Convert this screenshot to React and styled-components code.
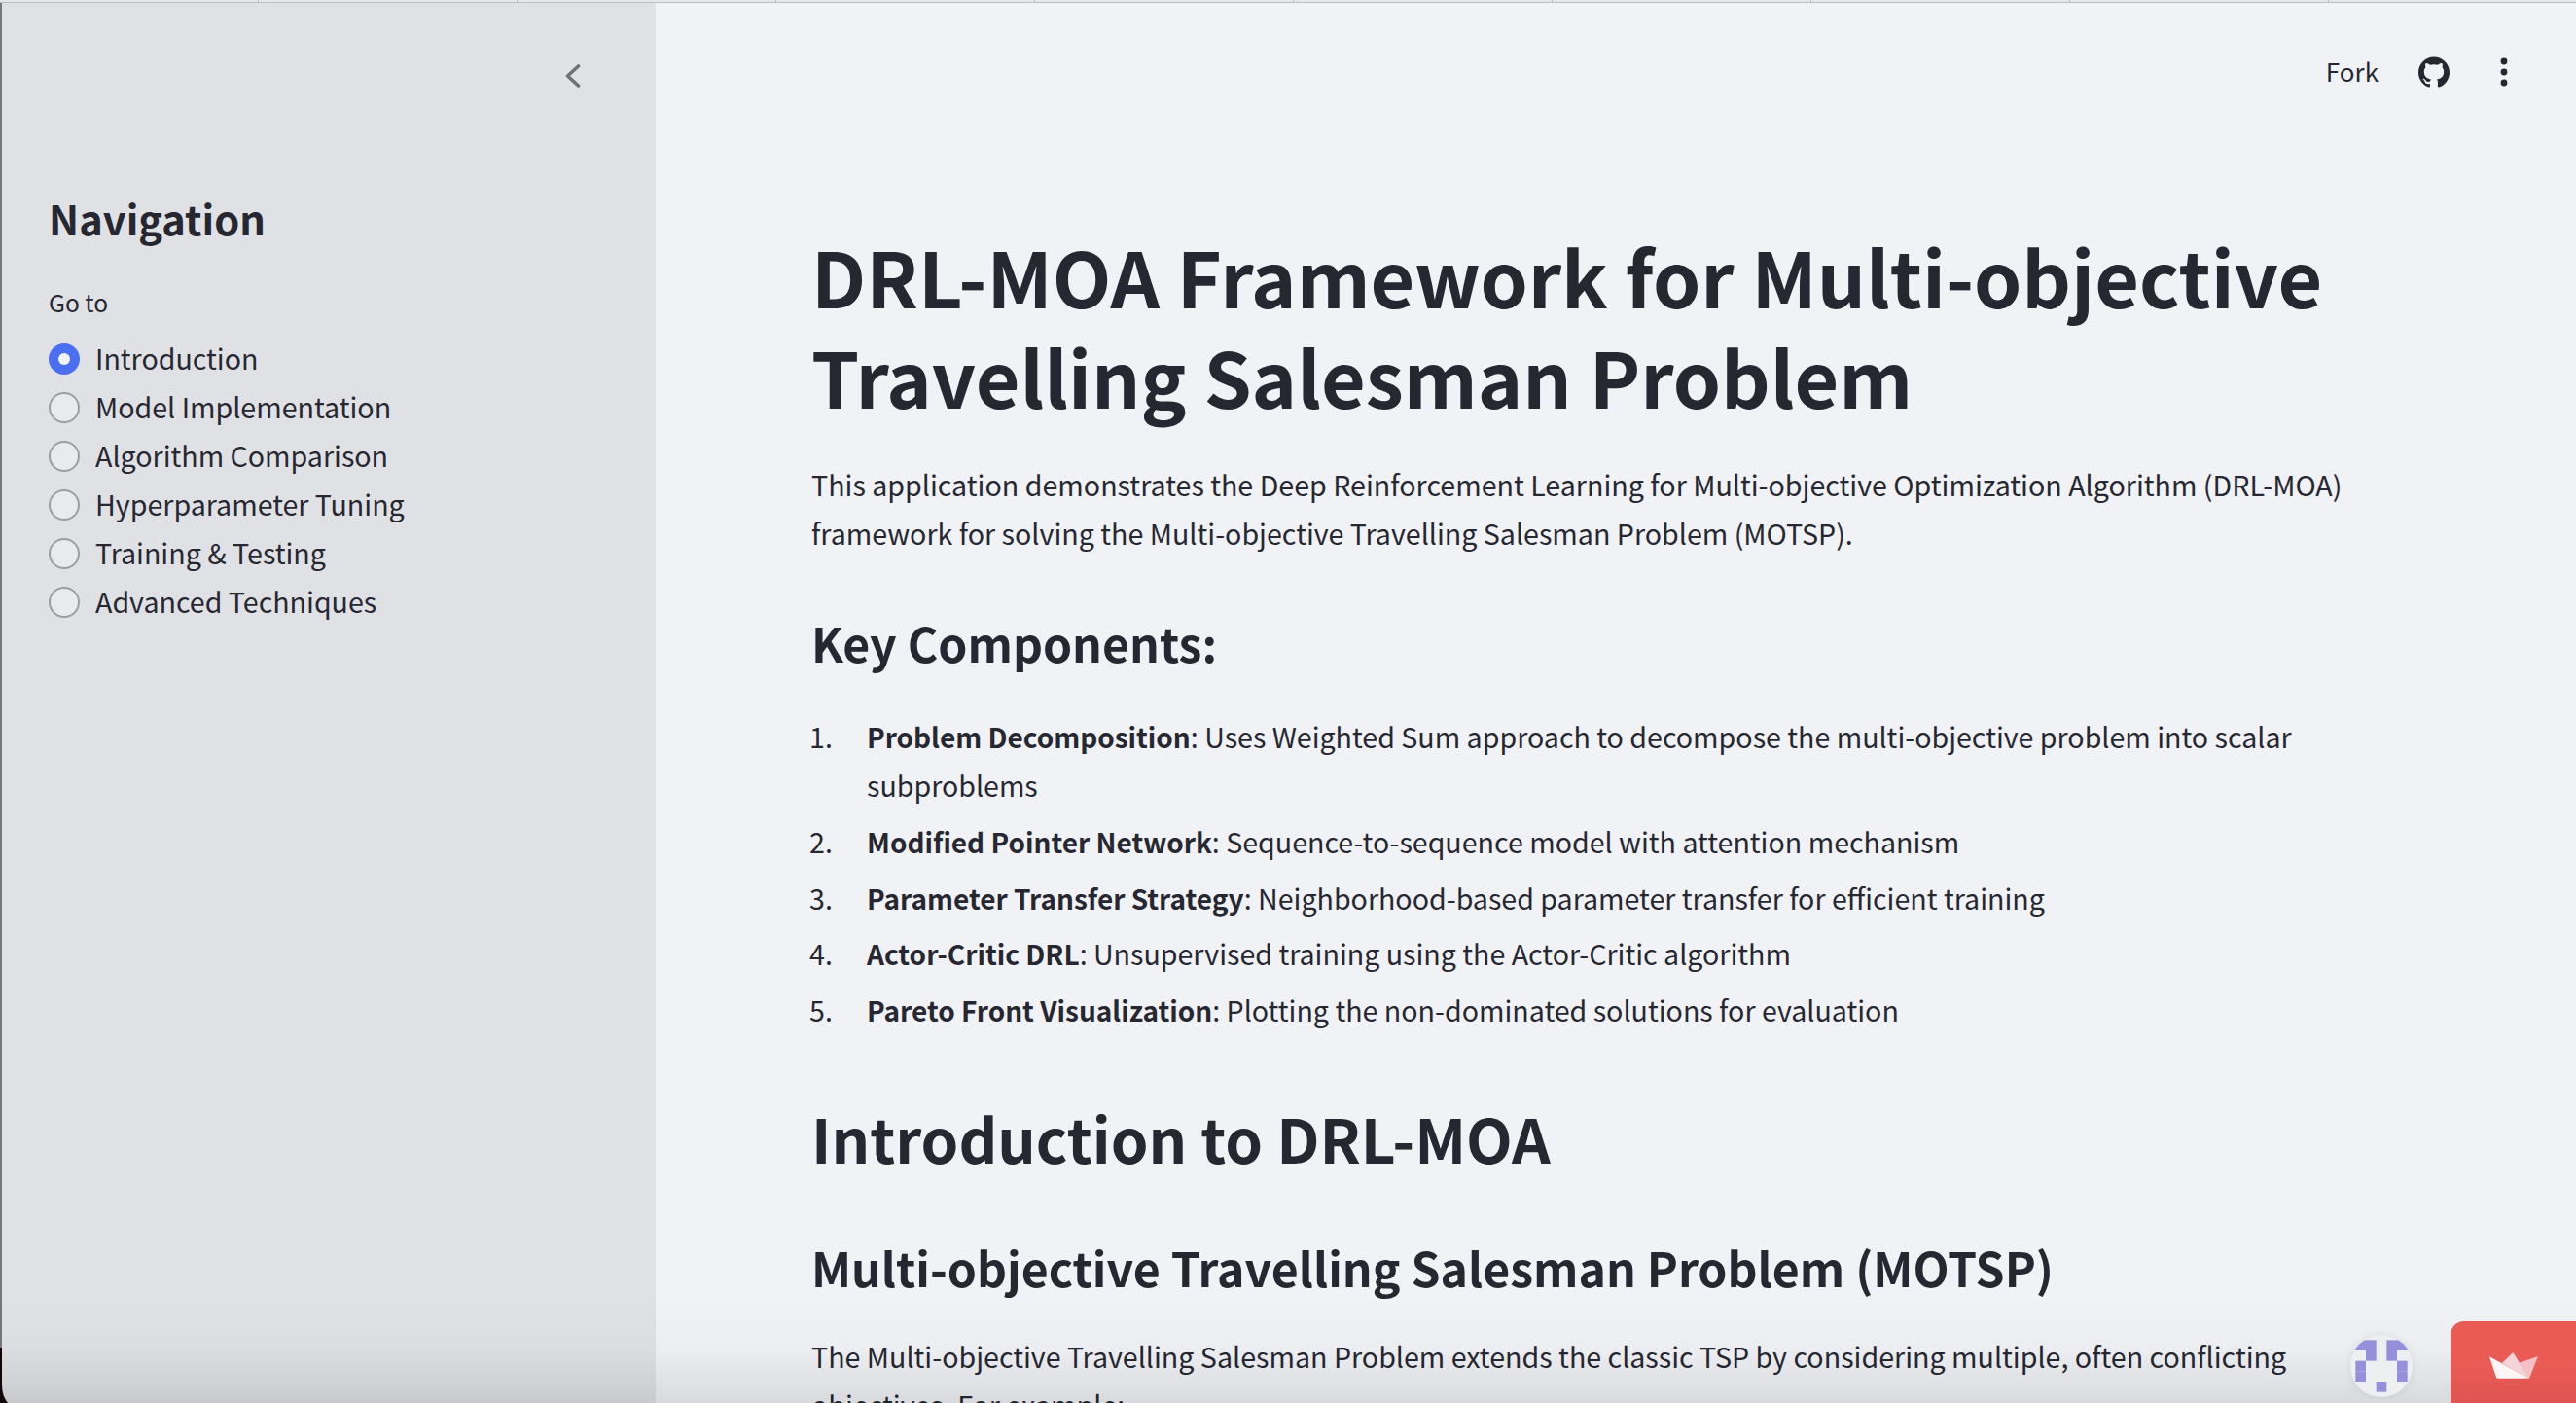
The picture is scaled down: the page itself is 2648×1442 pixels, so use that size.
import styled, { createGlobalStyle } from 'styled-components';
import { SiGithub } from 'react-icons/si';

const GlobalStyle = createGlobalStyle`
  html, body {
    margin: 0;
    padding: 0;
    background: #f0f2f6;
  }
  * {
    box-sizing: border-box;
  }
`;

const FONT = '"Noto Sans CJK SC", "Noto Sans", sans-serif';

const Page = styled.div`
  position: relative;
  display: flex;
  width: 2648px;
  height: 1442px;
  overflow: hidden;
  font-family: ${FONT};
  color: #262730;
  background: #f0f2f6;
`;

const TabStrip = styled.div`
  position: absolute;
  top: 0;
  left: 0;
  right: 0;
  height: 3px;
  display: flex;
  background: #e6e6e9;
  border-bottom: 1px solid #bdbec1;
  z-index: 3;
`;

const TabCell = styled.div`
  flex: 0 0 266px;
  border-right: 1px solid #bdbec1;
`;

const Sidebar = styled.aside`
  flex: 0 0 674px;
  height: 100%;
  padding: 66px 0 0 48px;
  background: #e0e1e5;
  border-left: 2px solid #777;
`;

const CollapseRow = styled.div`
  display: flex;
  justify-content: flex-end;
  padding-right: 77px;
  height: 135px;
  color: #707277;
`;

const NavTitle = styled.h2`
  margin: 0 0 45px;
  font-size: 41.6px;
  line-height: 46px;
  font-weight: 600;
  color: #262730;
`;

const GoToLabel = styled.div`
  font-size: 24.6px;
  line-height: 36px;
  margin-bottom: 16px;
`;

const RadioList = styled.div`
  display: flex;
  flex-direction: column;
`;

const RadioRow = styled.div`
  display: flex;
  align-items: center;
  gap: 16px;
  height: 50px;
  font-size: 28.6px;
`;

const RadioLabel = styled.span`
  padding-bottom: 4px;
`;

const RadioDot = styled.span`
  flex: 0 0 32px;
  height: 32px;
  border-radius: 50%;
  display: flex;
  align-items: center;
  justify-content: center;
  background: ${(p) => (p.$on ? '#4a6ff0' : '#e9eaee')};
  border: ${(p) => (p.$on ? 'none' : '2px solid #9c9da0')};
  &::after {
    content: '';
    display: ${(p) => (p.$on ? 'block' : 'none')};
    width: 12px;
    height: 12px;
    border-radius: 50%;
    background: #f0f2f6;
  }
`;

const Main = styled.main`
  flex: 1;
  min-width: 0;
  padding: 0 0 0 160px;
`;

const TopBar = styled.div`
  height: 148px;
  display: flex;
  align-items: center;
  justify-content: flex-end;
  margin-right: 69px;
  gap: 41px;
`;

const ForkLabel = styled.span`
  font-size: 26px;
  padding-bottom: 3px;
`;

const MenuDots = styled.svg`
  margin-left: 10px;
`;

const Content = styled.article`
  width: 1600px;
  margin-top: 84px;
`;

const Title = styled.h1`
  margin: 0 0 35px;
  font-size: 78.8px;
  line-height: 103px;
  font-weight: 700;
`;

const Paragraph = styled.p`
  margin: 0 0 52px;
  font-size: 28.64px;
  line-height: 50px;
`;

const SectionSub = styled.h3`
  margin: 0 0 32px;
  font-size: 48.2px;
  line-height: 70px;
  font-weight: 600;
`;

const Steps = styled.ol`
  list-style: none;
  margin: 37px 0 64px;
  padding: 0;
  font-size: 28.6px;
  line-height: 50px;
`;

const Step = styled.li`
  display: flex;
  margin-bottom: 7.8px;
  strong {
    font-size: 28px;
    font-weight: 600;
  }
`;

const StepNumber = styled.span`
  flex: 0 0 59px;
  margin-left: -2px;
`;

const SectionMain = styled.h2`
  margin: 0 0 56px;
  font-size: 62px;
  line-height: 84px;
  font-weight: 600;
`;

const BottomShade = styled.div`
  position: absolute;
  left: 0;
  right: 0;
  bottom: 0;
  height: 110px;
  background: linear-gradient(
    to bottom,
    rgba(0, 0, 0, 0),
    rgba(0, 0, 0, 0.02) 50%,
    rgba(0, 0, 0, 0.1)
  );
  pointer-events: none;
  z-index: 2;
`;

const WindowCorner = styled.svg`
  position: absolute;
  left: 0;
  bottom: 0;
  z-index: 3;
`;

const AvatarBadge = styled.div`
  position: absolute;
  left: 2416px;
  top: 1372px;
  width: 64px;
  height: 64px;
  border-radius: 50%;
  overflow: hidden;
  background: #eeeff1;
  box-shadow: 0 0 8px rgba(0, 0, 0, 0.08);
  z-index: 3;
`;

const HostBadge = styled.div`
  position: absolute;
  left: 2519px;
  right: 0;
  top: 1358px;
  bottom: 0;
  background: linear-gradient(to bottom, #ea5b56 50%, #df5551);
  border-top-left-radius: 14px;
  display: flex;
  justify-content: center;
  padding: 32px 0 0 0;
  z-index: 3;
`;

const NAV_ITEMS = [
  'Introduction',
  'Model Implementation',
  'Algorithm Comparison',
  'Hyperparameter Tuning',
  'Training & Testing',
  'Advanced Techniques',
];

const STEPS = [
  ['Problem Decomposition', 'Uses Weighted Sum approach to decompose the multi-objective problem into scalar subproblems'],
  ['Modified Pointer Network', 'Sequence-to-sequence model with attention mechanism'],
  ['Parameter Transfer Strategy', 'Neighborhood-based parameter transfer for efficient training'],
  ['Actor-Critic DRL', 'Unsupervised training using the Actor-Critic algorithm'],
  ['Pareto Front Visualization', 'Plotting the non-dominated solutions for evaluation'],
];

// [col, row] of the filled cells in the 5x5 identicon
const AVATAR_CELLS = [
  [0, 0], [1, 0], [3, 0], [4, 0],
  [1, 1], [3, 1],
  [0, 2], [4, 2],
  [0, 3], [4, 3],
  [2, 4],
];

function ChevronIcon() {
  return (
    <svg width="16" height="24" viewBox="0 0 16 24" fill="none">
      <path d="M13.5 2 L2.5 12 L13.5 22" stroke="currentColor" strokeWidth="3.6" strokeLinecap="round" strokeLinejoin="round" />
    </svg>
  );
}

function DotsIcon() {
  return (
    <MenuDots width="10" height="32" viewBox="0 0 10 32" fill="#262730">
      <circle cx="5" cy="5" r="3.4" />
      <circle cx="5" cy="16" r="3.4" />
      <circle cx="5" cy="27" r="3.4" />
    </MenuDots>
  );
}

function PixelAvatar() {
  return (
    <svg width="64" height="64" viewBox="0 0 64 64" fill="#9490dc">
      {AVATAR_CELLS.map(([col, row]) => (
        <rect key={`${col}-${row}`} x={5.33 + col * 10.67} y={5.33 + row * 10.67} width="10.67" height="10.67" />
      ))}
    </svg>
  );
}

function CrownIcon() {
  return (
    <svg width="50" height="27" viewBox="0 0 50 27">
      <path d="M24.3 0 L13 11 L41 26.7 Z" fill="#f6d5d8" />
      <path d="M50 4 L30 11 L41 26.7 Z" fill="#f4c1c6" />
      <path d="M0 4.3 L41 26.7 L9 26.7 Q7.5 26.7 7 25.5 Z" fill="#fdf6f6" />
    </svg>
  );
}

export default function App() {
  return (
    <Page>
      <GlobalStyle />
      <TabStrip>
        {Array.from({ length: 10 }, (_, i) => (
          <TabCell key={i} />
        ))}
      </TabStrip>
      <Sidebar>
        <CollapseRow>
          <ChevronIcon />
        </CollapseRow>
        <NavTitle>Navigation</NavTitle>
        <GoToLabel>Go to</GoToLabel>
        <RadioList>
          {NAV_ITEMS.map((item, i) => (
            <RadioRow key={item}>
              <RadioDot $on={i === 0} />
              <RadioLabel>{item}</RadioLabel>
            </RadioRow>
          ))}
        </RadioList>
      </Sidebar>
      <Main>
        <TopBar>
          <ForkLabel>Fork</ForkLabel>
          <SiGithub size={32} color="#262730" />
          <DotsIcon />
        </TopBar>
        <Content>
          <Title>DRL-MOA Framework for Multi-objective Travelling Salesman Problem</Title>
          <Paragraph>
            This application demonstrates the Deep Reinforcement Learning for Multi-objective Optimization Algorithm (DRL-MOA) framework for solving the Multi-objective Travelling Salesman Problem (MOTSP).
          </Paragraph>
          <SectionSub>Key Components:</SectionSub>
          <Steps>
            {STEPS.map(([head, rest], i) => (
              <Step key={head}>
                <StepNumber>{i + 1}.</StepNumber>
                <span>
                  <strong>{head}</strong>: {rest}
                </span>
              </Step>
            ))}
          </Steps>
          <SectionMain>Introduction to DRL-MOA</SectionMain>
          <SectionSub>Multi-objective Travelling Salesman Problem (MOTSP)</SectionSub>
          <Paragraph>
            The Multi-objective Travelling Salesman Problem extends the classic TSP by considering multiple, often conflicting objectives. For example:
          </Paragraph>
        </Content>
      </Main>
      <BottomShade />
      <WindowCorner width="10" height="57" viewBox="0 0 10 57" fill="#120608">
        <path d="M0 0 H2 V38 Q2 50 8 57 H0 Z" />
      </WindowCorner>
      <AvatarBadge>
        <PixelAvatar />
      </AvatarBadge>
      <HostBadge>
        <CrownIcon />
      </HostBadge>
    </Page>
  );
}
